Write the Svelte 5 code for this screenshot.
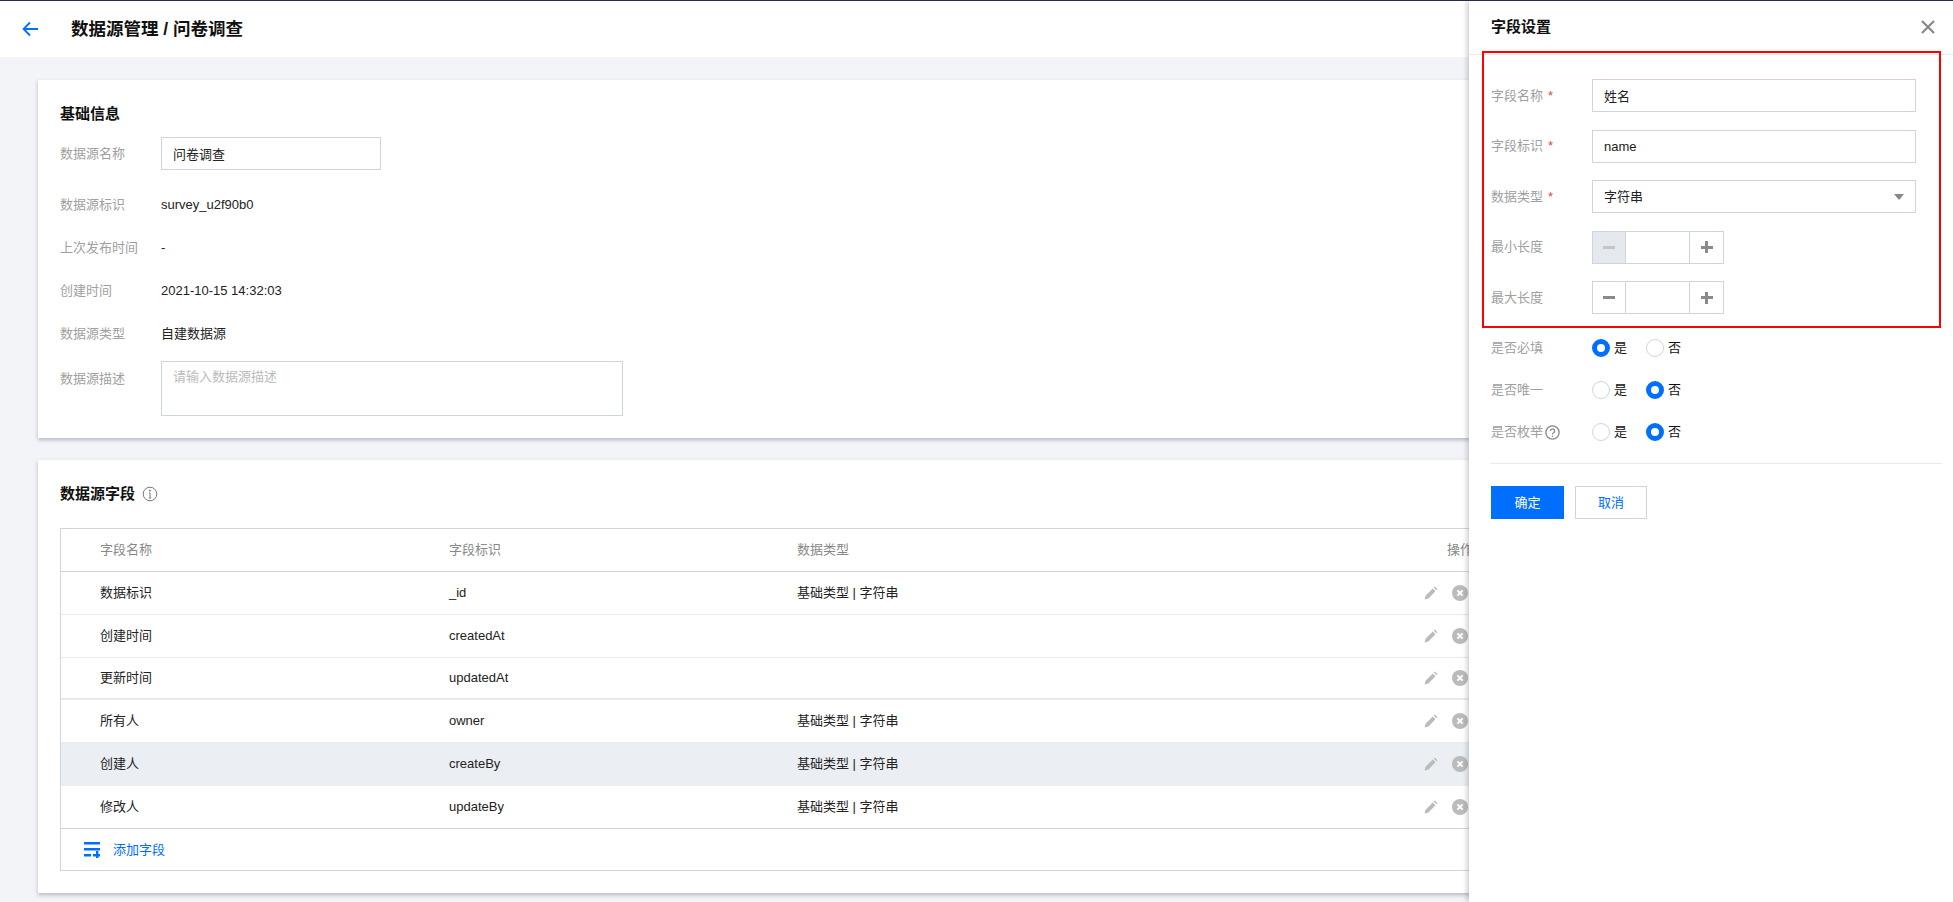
<script>
  const basics = [
    { label: '数据源标识', value: 'survey_u2f90b0' },
    { label: '上次发布时间', value: '-' },
    { label: '创建时间', value: '2021-10-15 14:32:03' },
    { label: '数据源类型', value: '自建数据源' }
  ];
  const rows = [
    { name: '数据标识', key: '_id', type: '基础类型 | 字符串' },
    { name: '创建时间', key: 'createdAt', type: '' },
    { name: '更新时间', key: 'updatedAt', type: '', thick: true },
    { name: '所有人', key: 'owner', type: '基础类型 | 字符串' },
    { name: '创建人', key: 'createBy', type: '基础类型 | 字符串', hover: true },
    { name: '修改人', key: 'updateBy', type: '基础类型 | 字符串' }
  ];
  const radios = [
    { label: '是否必填', yes: true },
    { label: '是否唯一', yes: false },
    { label: '是否枚举', yes: false, help: true }
  ];
</script>

<div class="page">
  <header class="topbar">
    <svg class="back" width="16" height="16" viewBox="0 0 16 16" fill="none" stroke="#006eff" stroke-width="1.8"><path d="M8 1.5 1.6 8 8 14.5M1.6 8H16" /></svg>
    <h1>数据源管理 / 问卷调查</h1>
  </header>

  <main class="content">
    <section class="card basic">
      <h2>基础信息</h2>
      <div class="form">
        <div class="row first">
          <span class="label">数据源名称</span>
          <input class="input name" value="问卷调查" />
        </div>
        {#each basics as item}
          <div class="row text">
            <span class="label">{item.label}</span>
            <span>{item.value}</span>
          </div>
        {/each}
        <div class="row top">
          <span class="label">数据源描述</span>
          <textarea class="input desc" placeholder="请输入数据源描述"></textarea>
        </div>
      </div>
    </section>

    <section class="card fields">
      <h2 class="with-icon">
        数据源字段
        <svg width="16" height="16" viewBox="0 0 16 16" fill="none" stroke="#777"><circle cx="8" cy="8" r="6.8" /><path d="M8 7v5M6.8 12h2.4M6.8 7H8" /><circle cx="8" cy="4.6" r=".6" fill="#777" /></svg>
      </h2>
      <div class="table">
        <div class="tr head">
          <span>字段名称</span><span>字段标识</span><span>数据类型</span><span class="op-head">操作</span>
        </div>
        {#each rows as row}
          <div class="tr" class:thick={row.thick} class:hover={row.hover}>
            <span>{row.name}</span>
            <span>{row.key}</span>
            <span>{row.type}</span>
            <span class="ops">
              <svg width="14" height="14" viewBox="1 0.5 12.5 12.5" fill="#bbb"><path d="M1.5 12.500l.9-3.400 6.400-6.400 2.500 2.500-6.400 6.400zM9.600 1.900l1-1 2.500 2.500-1 1z" /></svg>
              <svg width="16" height="16" viewBox="0 0 16 16"><circle cx="8" cy="8" r="8" fill="#bbb" /><path d="M5.4 5.4l5.2 5.2m0-5.2-5.2 5.2" stroke="#fff" stroke-width="2" /></svg>
            </span>
          </div>
        {/each}
        <div class="add">
          <svg width="16" height="16" viewBox="0 0 16 16" fill="#006eff"><path d="M0 0h16v2.400H0zM0 6h16v2.400H0zM0 12h7v2.400H0zM9 12h3V9h2.400v3H16v2.400h-1.600V16H12v-1.600H9z" /></svg>
          <span>添加字段</span>
        </div>
      </div>
    </section>
  </main>

  <aside class="drawer">
    <div class="drawer-head">
      <h3>字段设置</h3>
      <svg width="14" height="14" viewBox="0 0 14 14" stroke="#888" stroke-width="2.2" fill="none"><path d="M1 1l12 12M13 1 1 13" /></svg>
    </div>
    <div class="drawer-body">
      <div class="fields-col">
        <div class="f-row">
          <span class="label">字段名称<i>*</i></span>
          <input class="input wide" value="姓名" />
        </div>
        <div class="f-row">
          <span class="label">字段标识<i>*</i></span>
          <input class="input wide" value="name" />
        </div>
        <div class="f-row">
          <span class="label">数据类型<i>*</i></span>
          <div class="input wide select">字符串<b class="caret"></b></div>
        </div>
        <div class="f-row">
          <span class="label">最小长度</span>
          <div class="stepper">
            <button class="disabled"><span class="minus"></span></button>
            <span class="num"></span>
            <button><span class="plus"></span></button>
          </div>
        </div>
        <div class="f-row">
          <span class="label">最大长度</span>
          <div class="stepper">
            <button><span class="minus"></span></button>
            <span class="num"></span>
            <button><span class="plus"></span></button>
          </div>
        </div>
      </div>

      <div class="radio-col">
        {#each radios as r}
          <div class="f-row radio-row">
            <span class="label">
              {r.label}
              {#if r.help}
                <svg class="help" width="15" height="15" viewBox="0 0 15 15" fill="none" stroke="#888" stroke-width="1.3"><circle cx="7.5" cy="7.500" r="6.6" /><path d="M5.4 6a2.1 2.1 0 1 1 3.2 1.8c-.7.4-1.100.8-1.100 1.600" /><path d="M7.500 10.600v1.300" /></svg>
              {/if}
            </span>
            <span class="radio" class:on={r.yes}></span><span class="opt">是</span>
            <span class="radio second" class:on={!r.yes}></span><span class="opt">否</span>
          </div>
        {/each}
      </div>

      <div class="actions">
        <button class="primary">确定</button>
        <button class="ghost">取消</button>
      </div>
    </div>
    <div class="highlight"></div>
  </aside>
</div>

<style>
  :global(body) {
    margin: 0;
    background: #f2f4f8;
    overflow: hidden;
  }
  .page {
    position: relative;
    height: 902px;
    overflow: hidden;
    border-top: 1px solid #232f3e;
    box-sizing: border-box;
    font: 13px/20px "Liberation Sans", "Noto Sans CJK SC", sans-serif;
    color: #222;
  }
  h1, h2, h3 { margin: 0; color: #111; }
  .topbar {
    height: 56px;
    background: #fff;
    display: flex;
    align-items: center;
    padding-left: 22px;
  }
  .back { margin-right: 33px; }
  h1 { font-size: 17.5px; font-weight: 700; line-height: 24px; }
  .content { padding: 23px 38px 0; }
  .card {
    background: #fff;
    box-shadow: 0 2px 4px rgba(54, 58, 80, .32);
    padding: 0 22px;
    box-sizing: border-box;
  }
  .basic { height: 358px; padding-top: 23px; }
  h2 { font-size: 15px; font-weight: 700; line-height: 22px; }
  .form { display: flex; flex-direction: column; gap: 23px; margin-top: 12px; }
  .row { display: flex; align-items: center; }
  .row.first { margin-bottom: 2px; }
  .row.top { align-items: flex-start; margin-top: -6px; }
  .row.top .label { padding-top: 8px; }
  .label {
    width: 101px;
    flex: none;
    color: #a0a0a0;
    display: flex;
    align-items: center;
  }
  .input {
    box-sizing: border-box;
    height: 33px;
    border: 1px solid #cfd5de;
    border-radius: 0;
    outline: none;
    padding: 0 11px;
    font: inherit;
    color: #222;
    background: #fff;
    margin: 0;
  }
  .name { width: 220px; }
  .desc { width: 462px; height: 55px; padding: 5px 11px; resize: none; display: block; }
  .desc::placeholder { color: #bbb; }

  .fields { height: 433px; margin-top: 22px; padding-top: 23px; }
  .with-icon { display: flex; align-items: center; gap: 7px; }
  .table { margin-top: 23px; border: 1px solid #cfd5de; height: 343px; box-sizing: border-box; }
  .tr {
    display: grid;
    grid-template-columns: 349px 348px 627px 1fr;
    height: 43px;
    padding-left: 39px;
    align-items: center;
    border-bottom: 1px solid #e7eaef;
    box-sizing: border-box;
  }
  .tr.head { color: #888; border-bottom-color: #cfd5de; }
  .op-head { padding-left: 23px; }
  .tr.thick { height: 42px; border-bottom: 2px solid #e7eaef; }
  .tr.hover { background: #ebeef2; border-bottom-color: #ebeef2; }
  .tr:nth-last-child(2) { border-bottom-color: #cfd5de; }
  .ops { display: flex; align-items: center; gap: 14px; }
  .add { display: flex; align-items: center; gap: 13px; padding-left: 23px; height: 42px; color: #006eff; }

  .drawer {
    position: absolute;
    top: 0;
    right: 0;
    bottom: 0;
    width: 484px;
    background: #fff;
    box-shadow: -2px 0 5px rgba(54, 58, 80, .25);
  }
  .drawer-head {
    height: 54px;
    box-sizing: border-box;
    border-bottom: 1px solid #e7eaef;
    padding: 0 18px 2px 22px;
    display: flex;
    align-items: center;
    justify-content: space-between;
  }
  h3 { font-size: 15px; font-weight: 700; line-height: 22px; }
  .drawer-body { padding: 24px 11px 0 22px; }
  .fields-col { display: flex; flex-direction: column; gap: 17.5px; }
  .f-row { display: flex; align-items: center; }
  .f-row i {
    color: #e54545;
    font-style: normal;
    margin-left: 5px;
  }
  .wide { width: 324px; }
  .select { display: flex; align-items: center; justify-content: space-between; }
  .caret {
    border: 5px solid transparent;
    border-top: 6px solid #888;
    border-bottom: 0;
  }
  .stepper { display: flex; height: 33px; border: 1px solid #cfd5de; box-sizing: border-box; width: 132px; }
  .stepper button {
    width: 33px;
    padding: 0;
    border: 0;
    background: #fff;
    display: flex;
    align-items: center;
    justify-content: center;
    flex: none;
  }
  .stepper button:first-child { width: 32px; }
  .stepper button.disabled { background: #e5e8ed; }
  .num { flex: 1; border-left: 1px solid #cfd5de; border-right: 1px solid #cfd5de; }
  .minus, .plus { position: relative; display: block; width: 12px; height: 3px; background: #8a8a8a; }
  .disabled .minus { background: #c2c5ca; }
  .plus::after { content: ""; position: absolute; left: 4.5px; top: -4.5px; width: 3px; height: 12px; background: #8a8a8a; }

  .radio-col { display: flex; flex-direction: column; gap: 22px; margin-top: 24px; }
  .radio-row { height: 20px; }
  .help { margin-left: 2px; }
  .radio {
    box-sizing: border-box;
    width: 18px;
    height: 18px;
    border-radius: 50%;
    border: 1px solid #cfd5de;
    background: #fff;
  }
  .radio.on { border: 5px solid #006eff; }
  .radio.second { margin-left: 19px; }
  .opt { margin-left: 4px; width: 13px; color: #111; margin-top: -1px; }

  .actions {
    margin-top: 21px;
    padding-top: 22px;
    border-top: 1px solid #e7eaef;
    display: flex;
    gap: 11px;
  }
  .actions button {
    height: 33px;
    font: inherit;
    padding: 0;
    box-sizing: border-box;
  }
  .primary { width: 73px; background: #006eff; color: #fff; border: 0; }
  .ghost { width: 72px; background: #fff; color: #006eff; border: 1px solid #cfd5de; }

  .highlight {
    position: absolute;
    left: 13px;
    top: 50px;
    width: 459px;
    height: 277px;
    box-sizing: border-box;
    border: 2px solid #f00;
    pointer-events: none;
  }
</style>
